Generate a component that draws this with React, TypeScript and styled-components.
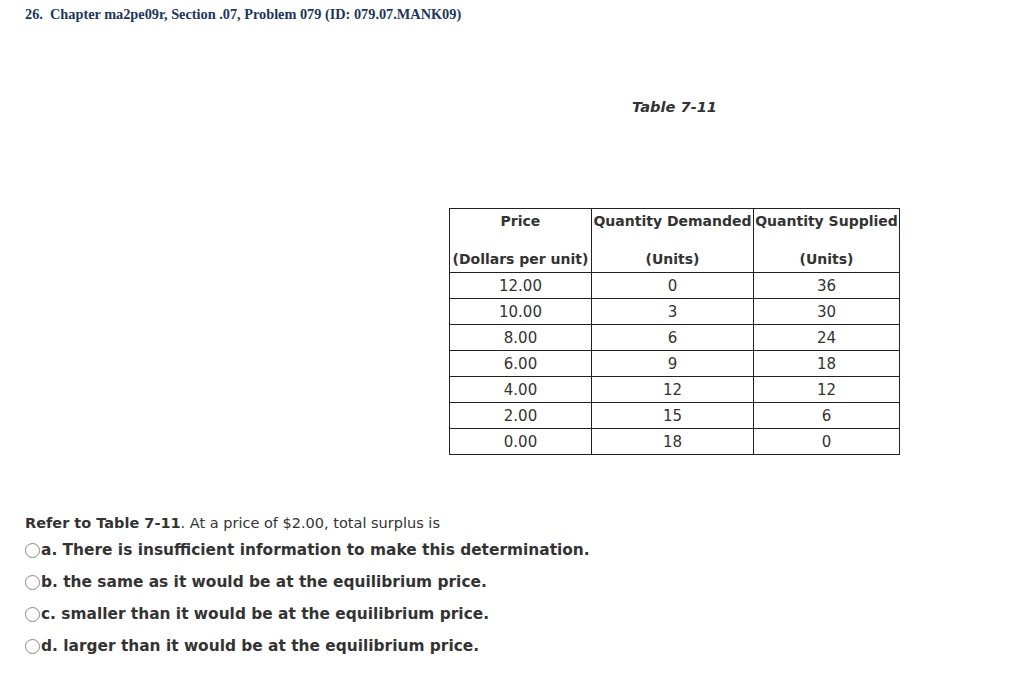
import styled, { createGlobalStyle } from "styled-components";

const GlobalStyle = createGlobalStyle`
  html, body {
    margin: 0;
    padding: 0;
    background: #ffffff;
  }
  body {
    font-family: "DejaVu Sans", Verdana, sans-serif;
    color: #333333;
  }
`;

const rows: [string, string, string][] = [
  ["12.00", "0", "36"],
  ["10.00", "3", "30"],
  ["8.00", "6", "24"],
  ["6.00", "9", "18"],
  ["4.00", "12", "12"],
  ["2.00", "15", "6"],
  ["0.00", "18", "0"],
];

const options = [
  "a. There is insufficient information to make this determination.",
  "b. the same as it would be at the equilibrium price.",
  "c. smaller than it would be at the equilibrium price.",
  "d. larger than it would be at the equilibrium price.",
];

const App = () => {
  return (
    <>
      <GlobalStyle />
      <Page>
        <ProblemTitle>
          26.&nbsp; Chapter ma2pe09r, Section .07, Problem 079 (ID: 079.07.MANK09)
        </ProblemTitle>
        <Figure>
          <Caption>Table 7-11</Caption>
          <DataTable>
            <thead>
              <tr>
                <HeadCell>
                  <HeadLine>Price</HeadLine>
                  <HeadLine>(Dollars per unit)</HeadLine>
                </HeadCell>
                <HeadCell>
                  <HeadLine>Quantity Demanded</HeadLine>
                  <HeadLine>(Units)</HeadLine>
                </HeadCell>
                <HeadCell>
                  <HeadLine>Quantity Supplied</HeadLine>
                  <HeadLine>(Units)</HeadLine>
                </HeadCell>
              </tr>
            </thead>
            <tbody>
              {rows.map((r) => (
                <tr key={r[0]}>
                  <Cell>{r[0]}</Cell>
                  <Cell>{r[1]}</Cell>
                  <Cell>{r[2]}</Cell>
                </tr>
              ))}
            </tbody>
          </DataTable>
        </Figure>
        <Question>
          <strong>Refer to Table 7-11</strong>. At a price of $2.00, total surplus is
        </Question>
        <Options>
          {options.map((o) => (
            <Option key={o}>
              <Radio />
              <OptionText>{o}</OptionText>
            </Option>
          ))}
        </Options>
      </Page>
    </>
  );
};

export default App;

const Page = styled.div`
  padding: 6px 0 0 25px;
`;

const ProblemTitle = styled.div`
  font-family: "Liberation Serif", "Times New Roman", serif;
  font-weight: bold;
  font-size: 14.3px;
  line-height: 16px;
  color: #1c3661;
`;

const Figure = styled.div`
  width: 451px;
  margin: 76px 0 0 424px;
`;

const Caption = styled.div`
  text-align: center;
  font-weight: bold;
  font-style: italic;
  font-size: 14.6px;
  line-height: 18px;
  color: #333333;
`;

const DataTable = styled.table`
  margin-top: 92px;
  width: 451px;
  border-collapse: collapse;
  border: 1px solid #222;
  table-layout: fixed;

  th:nth-child(1), td:nth-child(1) { width: 141px; }
  th:nth-child(2), td:nth-child(2) { width: 161px; }
`;

const HeadCell = styled.th`
  border: 1px solid #222;
  padding: 0;
  height: 63px;
  vertical-align: top;
  text-align: center;
  font-size: 14px;
  font-weight: bold;
  color: #333333;
  white-space: nowrap;
`;

const HeadLine = styled.div`
  line-height: 18px;
  padding-top: 3px;

  & + & {
    padding-top: 20px;
  }
`;

const Cell = styled.td`
  border: 1px solid #222;
  height: 25px;
  padding: 0;
  text-align: center;
  font-size: 15px;
  color: #333333;
`;

const Question = styled.div`
  margin-top: 59px;
  font-size: 14.5px;
  line-height: 18px;
  color: #333333;
`;

const Options = styled.div`
  display: flex;
  flex-direction: column;
  gap: 14px;
  margin-top: 9px;
`;

const Option = styled.div`
  display: flex;
  align-items: center;
  height: 18px;
`;

const Radio = styled.span`
  display: inline-block;
  width: 13px;
  height: 13px;
  border: 1px solid #8a8a8a;
  border-radius: 50%;
  margin-right: 1px;
  background: #fff;
  flex-shrink: 0;
`;

const OptionText = styled.span`
  font-size: 15.4px;
  font-weight: bold;
  color: #333333;
  white-space: nowrap;
`;
